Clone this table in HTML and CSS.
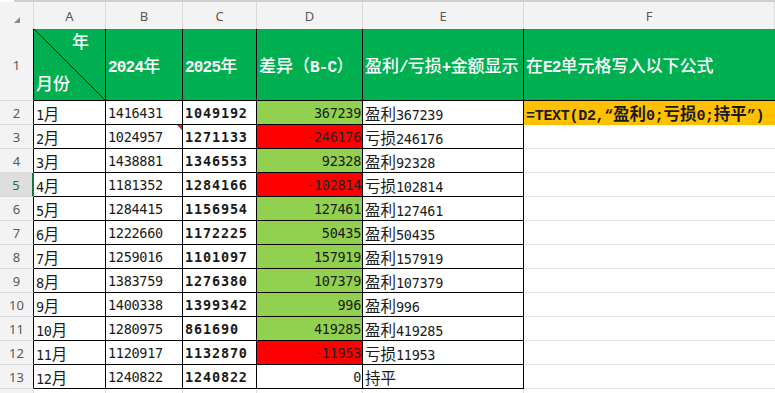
FILE: index.html
```html
<!DOCTYPE html>
<html lang="zh-CN">
<head>
<meta charset="utf-8">
<title>盈利/亏损</title>
<link rel="stylesheet" href="styles.css">
</head>
<body>
<div class="topbar"></div>
<div class="sheet">
  <div class="ch corner"><span class="tri"></span></div>
  <div class="ch">A</div><div class="ch">B</div><div class="ch">C</div><div class="ch">D</div><div class="ch">E</div><div class="ch">F</div>

  <div class="rh">1</div>
  <div class="c hd diag"><span class="k yr">年</span><span class="k mo">月份</span></div>
  <div class="c hd">2024<span class="k">年</span></div>
  <div class="c hd">2025<span class="k">年</span></div>
  <div class="c hd"><span class="k">差异（</span>B-C<span class="k">）</span></div>
  <div class="c hd"><span class="k">盈利</span>/<span class="k">亏损</span>+<span class="k">金额显示</span></div>
  <div class="c hd last"><span class="k">在</span>E2<span class="k">单元格写入以下公式</span></div>

  <div class="rh">2</div><div class="c">1<span class="k">月</span></div><div class="c">1416431</div><div class="c b">1049192</div><div class="c num pos">367239</div><div class="c"><span class="k">盈利</span>367239</div><div class="c fx">=TEXT(D2,“<span class="k">盈利</span>0;<span class="k">亏损</span>0;<span class="k">持平</span>”)</div>
  <div class="rh">3</div><div class="c">2<span class="k">月</span></div><div class="c note">1024957</div><div class="c b">1271133</div><div class="c num neg">-246176</div><div class="c"><span class="k">亏损</span>246176</div><div class="e"></div>
  <div class="rh">4</div><div class="c">3<span class="k">月</span></div><div class="c">1438881</div><div class="c b">1346553</div><div class="c num pos">92328</div><div class="c"><span class="k">盈利</span>92328</div><div class="e"></div>
  <div class="rh sel">5</div><div class="c">4<span class="k">月</span></div><div class="c">1181352</div><div class="c b">1284166</div><div class="c num neg">-102814</div><div class="c"><span class="k">亏损</span>102814</div><div class="e"></div>
  <div class="rh">6</div><div class="c">5<span class="k">月</span></div><div class="c">1284415</div><div class="c b">1156954</div><div class="c num pos">127461</div><div class="c"><span class="k">盈利</span>127461</div><div class="e"></div>
  <div class="rh">7</div><div class="c">6<span class="k">月</span></div><div class="c">1222660</div><div class="c b">1172225</div><div class="c num pos">50435</div><div class="c"><span class="k">盈利</span>50435</div><div class="e"></div>
  <div class="rh">8</div><div class="c">7<span class="k">月</span></div><div class="c">1259016</div><div class="c b">1101097</div><div class="c num pos">157919</div><div class="c"><span class="k">盈利</span>157919</div><div class="e"></div>
  <div class="rh">9</div><div class="c">8<span class="k">月</span></div><div class="c">1383759</div><div class="c b">1276380</div><div class="c num pos">107379</div><div class="c"><span class="k">盈利</span>107379</div><div class="e"></div>
  <div class="rh">10</div><div class="c">9<span class="k">月</span></div><div class="c">1400338</div><div class="c b">1399342</div><div class="c num pos">996</div><div class="c"><span class="k">盈利</span>996</div><div class="e"></div>
  <div class="rh">11</div><div class="c">10<span class="k">月</span></div><div class="c">1280975</div><div class="c b">861690</div><div class="c num pos">419285</div><div class="c"><span class="k">盈利</span>419285</div><div class="e"></div>
  <div class="rh">12</div><div class="c">11<span class="k">月</span></div><div class="c">1120917</div><div class="c b">1132870</div><div class="c num neg">-11953</div><div class="c"><span class="k">亏损</span>11953</div><div class="e"></div>
  <div class="rh">13</div><div class="c">12<span class="k">月</span></div><div class="c">1240822</div><div class="c b">1240822</div><div class="c num">0</div><div class="c"><span class="k">持平</span></div><div class="e"></div>

  <div class="rh light"></div><div class="g"></div><div class="g"></div><div class="g"></div><div class="g"></div><div class="g"></div><div class="g last"></div>
</div>
</body>
</html>
```
FILE: styles.css
```css
* { box-sizing: border-box; }
html, body { margin: 0; padding: 0; background: #fff; overflow: hidden; }
body { width: 775px; height: 393px; }

.topbar {
  height: 2px;
  margin-left: 14px;
  background: #cfcfcf;
}

.sheet {
  display: grid;
  grid-template-columns: 34px 72px 77px 74px 106px 161px 251px;
  grid-template-rows: 27px 72px repeat(12, 24px) 4px;
  font-family: "DejaVu Sans Mono", "Noto Sans CJK SC", monospace;
  font-size: 13.5px;
  letter-spacing: -0.3px;
  color: #1a1a1a;
}

.k {
  font-family: "Noto Sans CJK SC", sans-serif;
  font-size: 15.5px;
  letter-spacing: 0;
}

.ch {
  background: #f3f3f3;
  border-right: 1px solid #dadada;
  color: #595959;
  font-family: "Noto Sans", sans-serif;
  font-size: 13px;
  letter-spacing: 0;
  display: flex;
  align-items: center;
  justify-content: center;
}
.corner { position: relative; justify-content: flex-start; }
.tri {
  position: absolute;
  left: 14px;
  top: 15px;
  width: 0; height: 0;
  border-left: 6px solid transparent;
  border-bottom: 6px solid #8a8a8a;
}

.rh {
  background: #f3f3f3;
  border-right: 1px solid #000;
  border-bottom: 1px solid #dadada;
  color: #595959;
  font-family: "Noto Sans", sans-serif;
  font-size: 13px;
  letter-spacing: 0;
  display: flex;
  align-items: center;
  justify-content: center;
}
.rh.sel {
  background: #dedede;
  color: #1e7145;
  border-right: 2px solid #1e7145;
}
.rh.light { border-right-color: #dadada; border-bottom: none; }

.c {
  border-right: 1px solid #000;
  border-bottom: 1px solid #000;
  padding: 1px 2px 0;
  line-height: 22px;
  white-space: nowrap;
  overflow: hidden;
}
.c.b { font-weight: bold; letter-spacing: 0.85px; }
.c.num { text-align: right; padding-right: 1px; }
.pos { background: #92d050; }
.neg { background: #ff0000; color: #222; }
.note { position: relative; }
.note::after {
  content: "";
  position: absolute;
  top: 0; right: 0;
  border-top: 5px solid #e02020;
  border-left: 5px solid transparent;
}

.hd {
  background: #00b050;
  color: #fff;
  font-family: "Liberation Mono", "Noto Sans CJK SC", monospace;
  font-size: 16px;
  font-weight: bold;
  letter-spacing: -0.8px;
  line-height: 70px;
}
.hd .k { font-size: 17px; font-weight: 500; letter-spacing: 0; }
.hd.last { border-right: none; }

.diag {
  position: relative;
  display: flex;
  line-height: 22px;
  background: linear-gradient(to top right, #00b050 calc(50% - 0.8px), #1b1b1b 50%, #00b050 calc(50% + 0.8px));
  flex-direction: column;
  align-items: stretch;
  justify-content: space-between;
  padding: 1px 16px 6px 2px;
}
.yr { align-self: flex-end; }
.mo { align-self: flex-start; }

.fx {
  background: #ffc000;
  border-right: none;
  border-bottom: none;
  font-family: "Liberation Mono", "Noto Sans CJK SC", monospace;
  font-weight: bold;
  font-size: 15px;
  letter-spacing: -0.3px;
  color: #1a1a1a;
}
.fx .k { font-size: 16.5px; font-weight: bold; letter-spacing: 0; }

.e { border-bottom: 1px solid #e4e4e4; }
.g { border-right: 1px solid #dadada; }
.g.last { border-right: none; }
```
